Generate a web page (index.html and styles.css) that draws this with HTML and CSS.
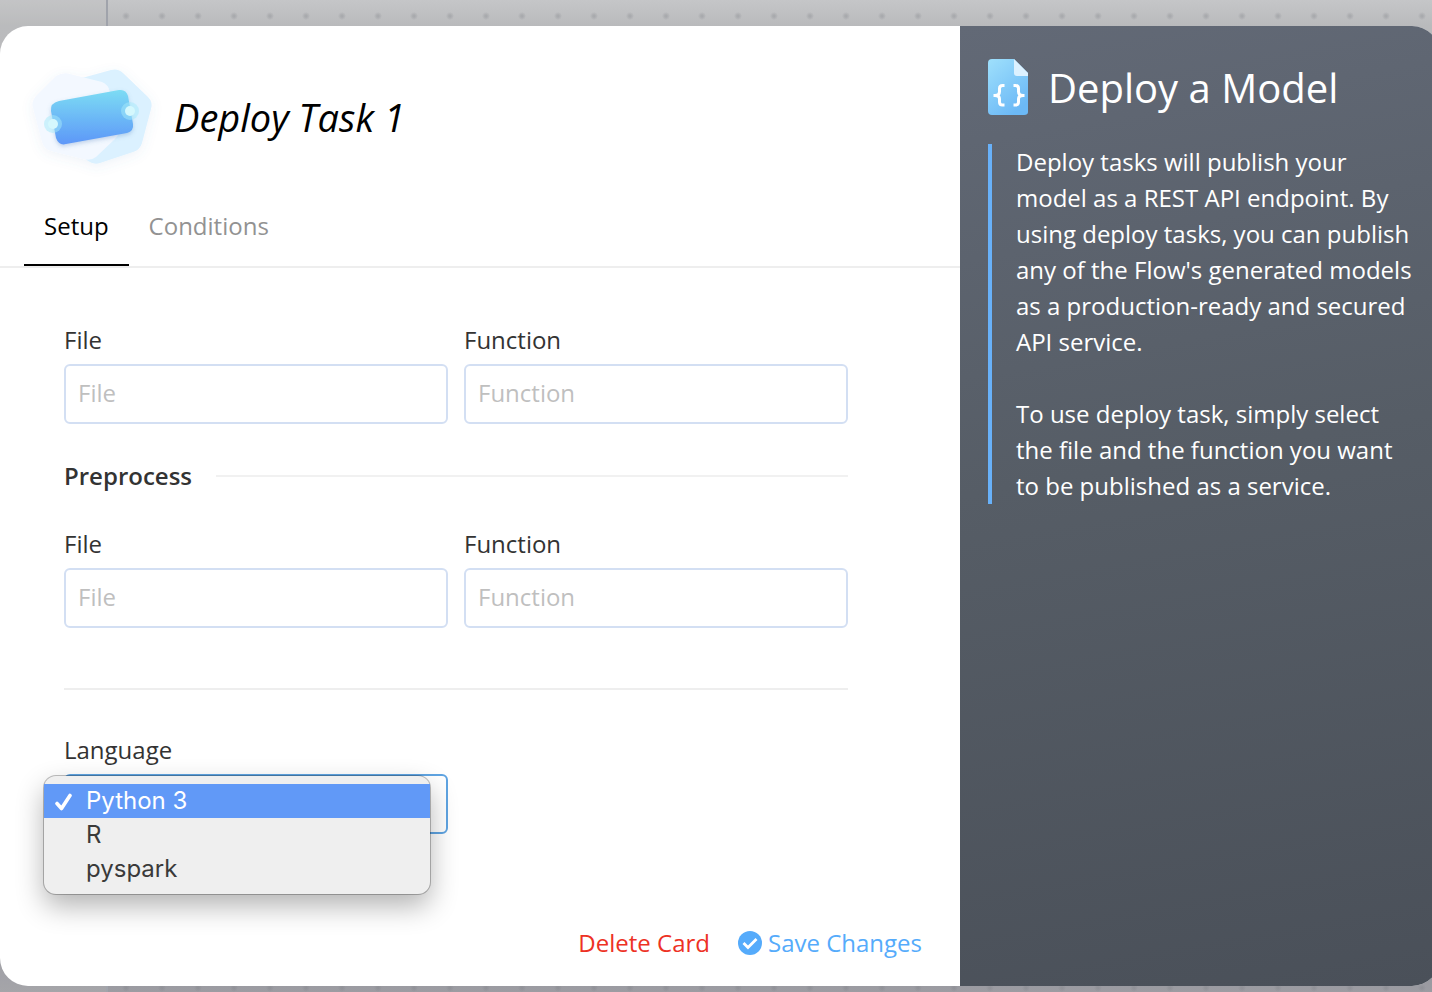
FILE: index.html
```html
<!DOCTYPE html>
<html lang="en">
<head>
<meta charset="utf-8">
<title>Deploy Task</title>
<link rel="stylesheet" href="styles.css">
</head>
<body>
<div class="canvas">
  <div class="canvas-edge"></div>
  <div class="canvas-grid"></div>
</div>
<div class="modal">
  <main class="editor">
    <header class="editor-header">
      <svg class="task-icon" viewBox="0 0 150 120" aria-hidden="true">
        <defs>
          <linearGradient id="ticket" x1="0" y1="0" x2="0" y2="1">
            <stop offset="0" stop-color="#7cdcf4"/><stop offset="1" stop-color="#5d97f8"/>
          </linearGradient>
          <filter id="soft" x="-30%" y="-30%" width="160%" height="160%">
            <feDropShadow dx="0" dy="3" stdDeviation="6" flood-color="#4a7ab8" flood-opacity=".09"/>
          </filter>
          <filter id="near" x="-20%" y="-20%" width="140%" height="150%">
            <feDropShadow dx="0" dy="2" stdDeviation="2" flood-color="#4a7ab8" flood-opacity=".3"/>
          </filter>
        </defs>
        <g filter="url(#soft)">
          <path fill="#dbf1ff" d="M62 18 L91 10 Q98 8 103 13 L128 37 Q133 42 131 49 L122 83 Q120 90 113 92 L80 103 Q74 105 68 101 L50 85 L50 28 Z"/>
          <path fill="#f3f8ff" d="M36 16 Q43 12 50 14 L82 22 Q88 24 90 32 L99 66 Q101 73 95 79 L76 97 Q71 101 63 99 L31 91 Q24 89 22 82 L13 48 Q11 42 16 36 Z"/>
        </g>
        <g filter="url(#near)">
          <path fill="url(#ticket)" d="M39 41 L99 30 Q106 29 108 36 L113 64 Q114 71 107 73 L46 84 Q39 86 36 78 L31 51 Q30 43 39 41 Z"/>
        </g>
        <g fill="#a5eafa" fill-opacity=".5"><circle cx="33" cy="64" r="9"/><circle cx="110" cy="51" r="9"/></g>
        <g fill="#d5f8fd"><circle cx="33" cy="64" r="5"/><circle cx="110" cy="51" r="5"/></g>
      </svg>
      <h1 class="task-name">Deploy Task 1</h1>
    </header>
    <nav class="tabs" role="tablist">
      <button class="tab tab-active" type="button" role="tab" aria-selected="true">Setup</button>
      <button class="tab" type="button" role="tab" aria-selected="false">Conditions</button>
    </nav>
    <form class="form">
      <div class="row">
        <div class="field"><label for="file">File</label><input id="file" type="text" placeholder="File"></div>
        <div class="field"><label for="function">Function</label><input id="function" type="text" placeholder="Function"></div>
      </div>
      <h2 class="section-title">Preprocess</h2>
      <div class="row">
        <div class="field"><label for="pre-file">File</label><input id="pre-file" type="text" placeholder="File"></div>
        <div class="field"><label for="pre-function">Function</label><input id="pre-function" type="text" placeholder="Function"></div>
      </div>
      <hr class="divider">
      <div class="row">
        <div class="field language">
          <label for="language">Language</label>
          <select id="language"><option></option></select>
          <div class="menu" role="listbox" aria-label="Language">
            <button class="option option-selected" type="button" role="option" aria-selected="true">
              <svg class="tick" viewBox="0 0 20 20" aria-hidden="true"><path d="M3 12.500 L7.500 17.500 L16 4.500" fill="none" stroke="#fff" stroke-width="3.600" stroke-linecap="round" stroke-linejoin="round"/></svg>
              <span>Python 3</span>
            </button>
            <button class="option" type="button" role="option" aria-selected="false">R</button>
            <button class="option" type="button" role="option" aria-selected="false">pyspark</button>
          </div>
        </div>
      </div>
    </form>
    <footer class="actions">
      <button class="action delete" type="button">Delete Card</button>
      <button class="action save" type="button">
        <svg class="save-icon" viewBox="0 0 24 24" aria-hidden="true"><circle cx="12" cy="12" r="12" fill="#55abfb"/><path d="M5.500 12 L10 16.500 L18.500 8" fill="none" stroke="#fff" stroke-width="2.800"/></svg>
        <span>Save Changes</span>
      </button>
    </footer>
  </main>
  <aside class="help">
    <div class="help-heading">
      <svg class="file-icon" viewBox="0 0 40 56" aria-hidden="true">
        <defs><linearGradient id="page" x1="0" y1="0" x2=".6" y2="1"><stop offset="0" stop-color="#9fe0fc"/><stop offset="1" stop-color="#6cb9f6"/></linearGradient></defs>
        <path fill="url(#page)" d="M4 0 H26 L40 14 V53 Q40 56 36 56 H4 Q0 56 0 52 V4 Q0 0 4 0 Z"/>
        <path fill="#dcf1ff" d="M26 0 L40 14 V17 H29 Q26 17 26 14 Z"/>
        <g fill="none" stroke="#fff" stroke-width="3">
          <path d="M16.500 26.500 H14.500 Q11.500 26.500 11.500 29.500 V32.500 Q11.500 36.500 7 36.500 H5.500 H7 Q11.500 36.500 11.500 40 V43 Q11.500 46 14.500 46 H16.500"/>
          <path d="M25.500 26.500 H27.500 Q30.500 26.500 30.500 29.500 V32.500 Q30.500 36.500 35 36.500 H36.500 H35 Q30.500 36.500 30.500 40 V43 Q30.500 46 27.500 46 H25.500"/>
        </g>
      </svg>
      <h2>Deploy a Model</h2>
    </div>
    <div class="help-text">
      <p>Deploy tasks will publish your model as a REST API endpoint. By using deploy tasks, you can publish any of the Flow's generated models as a production-ready and secured API service.</p>
      <p>To use deploy task, simply select the file and the function you want to be published as a service.</p>
    </div>
  </aside>
</div>
</body>
</html>
```
FILE: styles.css
```css
* { box-sizing: border-box; }
html { overflow: hidden; }
body {
  margin: 0;
  padding: 26px 0 6px;
  min-height: 100vh;
  display: flex;
  background: linear-gradient(#c5c6c8 0, #b9babc 26px, #98989f 98%, #9c9ca2 100%);
  color: #333;
  font: 24px/32px "Open Sans", "Noto Sans", sans-serif;
}
h1, h2, p { margin: 0; font-weight: 400; }
button, input, select { font: inherit; }
button { border: 0; padding: 0; background: none; cursor: pointer; }

.canvas { position: absolute; inset: 0; display: flex; z-index: -1; }
.canvas-edge { width: 108px; border-right: 2px solid #a0a3ab; background: rgba(190, 190, 190, .25); }
.canvas-grid {
  flex: 1;
  background: radial-gradient(circle, rgba(125, 127, 134, .32) 1px, transparent 4px) 0 -2px / 36px 36px;
}

.modal {
  flex: 1;
  display: grid;
  grid-template-columns: 2fr 1fr;
  margin-right: -8px;
  border-radius: 28px;
  overflow: hidden;
  background: #fff;
}
.editor { min-width: 0; display: flex; flex-direction: column; }
.editor-header { display: flex; align-items: center; gap: 4px; padding: 34px 20px 0; }
.task-icon { width: 150px; height: 120px; flex: none; }
.task-name { padding-bottom: 6px; color: #000; font-size: 38px; line-height: 48px; font-style: italic; }

.tabs { display: flex; padding: 4px 24px 0; border-bottom: 2px solid #eee; }
.tab { padding: 26px 20px 22px; color: #929292; border-bottom: 2px solid transparent; }
.tab-active { color: #000; border-color: #000; }

.form { padding: 56px 112px 0 64px; }
.row { display: grid; grid-template-columns: 1fr 1fr; gap: 16px; }
.field { display: flex; flex-direction: column; gap: 8px; }
.field input, .field select {
  width: 100%;
  height: 60px;
  padding: 0 12px 4px;
  border: 2px solid #d3dff3;
  border-radius: 6px;
  background: #fff;
  outline: 0;
}
.field input::placeholder { color: #bfbfbf; opacity: 1; }
.section-title {
  display: flex;
  align-items: center;
  gap: 24px;
  margin: 36px 0;
  font-size: 24px;
  line-height: 32px;
  font-weight: 600;
}
.section-title::after { content: ""; flex: 1; height: 2px; background: #f1f1f1; }
.divider { height: 2px; margin: 60px 0 44px; border: 0; background: #eee; }

.language { position: relative; }
.field.language select { appearance: none; border-color: #5fa4e2; }
.menu {
  position: absolute;
  top: 42px;
  left: -20px;
  right: 18px;
  display: flex;
  flex-direction: column;
  padding: 8px 0;
  border-radius: 12px;
  background: #efefef;
  box-shadow: 0 0 0 1px rgba(0, 0, 0, .25), 0 12px 28px rgba(0, 0, 0, .3);
}
.option {
  display: flex;
  align-items: center;
  gap: 12px;
  height: 34px;
  padding: 0 42px;
  color: #3a3a3a;
  font: 400 24px/34px Inter, sans-serif;
}
.option-selected { padding-left: 10px; background: #6199f7; color: #fff; }
.tick { width: 20px; height: 20px; }

.actions { display: flex; justify-content: flex-end; gap: 28px; margin-top: auto; padding: 0 38px 27px; }
.action { display: flex; align-items: center; gap: 6px; }
.delete { color: #ed3124; }
.save { color: #55abfb; }
.save-icon { width: 24px; height: 24px; }

.help {
  min-width: 0;
  padding: 32px 24px 32px 28px;
  background: linear-gradient(170deg, #626976, #565d66 45%, #4a5059);
  color: #fff;
}
.help-heading { display: flex; align-items: center; gap: 20px; }
.file-icon { width: 40px; height: 56px; flex: none; }
.help-heading h2 { padding-top: 2px; font-size: 40px; line-height: 56px; }
.help-text {
  display: flex;
  flex-direction: column;
  gap: 36px;
  margin-top: 28px;
  padding-left: 24px;
  border-left: 4px solid #68b1f9;
  line-height: 36px;
}
```
